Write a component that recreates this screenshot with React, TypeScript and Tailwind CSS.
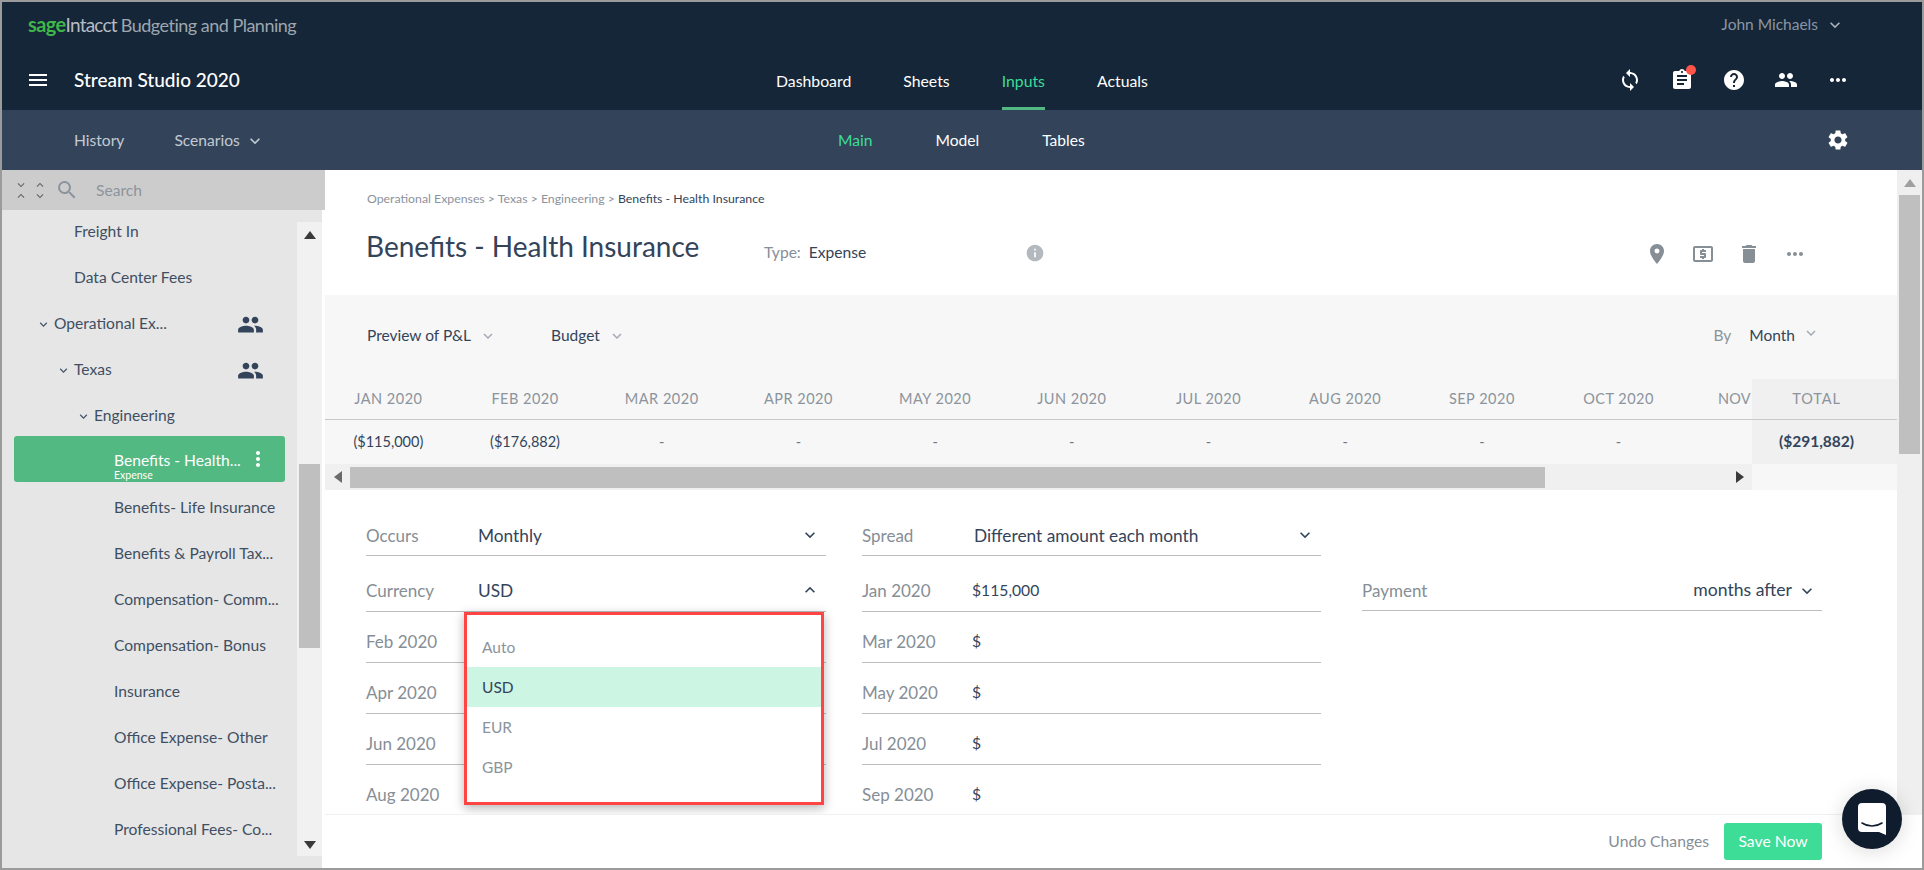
import React from 'react';
import {
  MdAssignment,
  MdDelete,
  MdHelp,
  MdInfo,
  MdKeyboardArrowDown,
  MdKeyboardArrowUp,
  MdLocalAtm,
  MdMenu,
  MdMoreHoriz,
  MdMoreVert,
  MdPeople,
  MdPlace,
  MdSearch,
  MdSettings,
  MdSync,
} from 'react-icons/md';

const months = ['JAN', 'FEB', 'MAR', 'APR', 'MAY', 'JUN', 'JUL', 'AUG', 'SEP', 'OCT'];
const values = ['($115,000)', '($176,882)', '-', '-', '-', '-', '-', '-', '-', '-'];

const leaves = [
  'Benefits- Life Insurance',
  'Benefits & Payroll Tax...',
  'Compensation- Comm...',
  'Compensation- Bonus',
  'Insurance',
  'Office Expense- Other',
  'Office Expense- Posta...',
  'Professional Fees- Co...',
];

const TopNav = () => (
  <div className="bg-[#152638] h-[108px] shrink-0 flex flex-col">
    <div className="h-[46px] flex items-center justify-between pl-[26px] pr-[77px]">
      <div className="flex items-baseline leading-none pb-[2px]">
        <span className="text-[#3fb54a] font-bold text-[20px] tracking-[-0.6px]">sage</span>
        <span className="text-[#b5bcc4] text-[19px] tracking-[-0.8px]">Intacct</span>
        <span className="text-[#9ea6af] text-[18px] tracking-[-0.5px] ml-[4px]">Budgeting and Planning</span>
      </div>
      <div className="flex items-center gap-[7px] text-[15.5px] text-[#8a96a3]">
        John Michaels
        <MdKeyboardArrowDown size={20} className="text-[#a7b0ba]" />
      </div>
    </div>
    <div className="flex-1 flex items-center pl-[24px] pr-[72px] pt-[2px]">
      <MdMenu size={24} className="text-white shrink-0" />
      <span className="ml-[24px] text-white text-[19px] font-medium w-[702px]">Stream Studio 2020</span>
      <div className="flex self-stretch -mt-[2px] gap-[52px] text-[15.8px] text-white">
        <span className="flex items-center pt-[6px] border-b-[3px] border-transparent">Dashboard</span>
        <span className="flex items-center pt-[6px] border-b-[3px] border-transparent">Sheets</span>
        <span className="flex items-center pt-[6px] text-[#3ddc97] border-b-[3px] border-[#52b983]">Inputs</span>
        <span className="flex items-center pt-[6px] border-b-[3px] border-transparent">Actuals</span>
      </div>
      <div className="ml-auto flex items-center gap-[28px] text-white">
        <MdSync size={24} />
        <span className="relative">
          <MdAssignment size={24} />
          <span className="absolute -top-[3px] -right-[2px] w-[10px] h-[10px] rounded-full bg-[#ff5449]" />
        </span>
        <MdHelp size={24} />
        <MdPeople size={24} />
        <MdMoreHoriz size={24} />
      </div>
    </div>
  </div>
);

const SubNav = () => (
  <div className="bg-[#33445a] h-[60px] shrink-0 flex items-center pl-[72px] pr-[72px] text-[15.6px]">
    <div className="w-[764px] flex items-center pt-[2px] text-[#c3cad2]">
      <span>History</span>
      <span className="ml-[50px]">Scenarios</span>
      <MdKeyboardArrowDown size={20} className="ml-[5px]" />
    </div>
    <div className="flex gap-[63px] pt-[2px]">
      <span className="text-[#3ddc97]">Main</span>
      <span className="text-white">Model</span>
      <span className="text-white">Tables</span>
    </div>
    <MdSettings size={24} className="text-white ml-auto" />
  </div>
);

const Row = ({ indent, open, team, children }: { indent: number; open?: boolean; team?: boolean; children: React.ReactNode }) => (
  <div className="h-[46px] shrink-0 flex items-center text-[15.6px] text-[#3f4f63]" style={{ paddingLeft: indent }}>
    {open && <MdKeyboardArrowDown size={15} className="text-[#46566a] mr-[3px]" />}
    <span>{children}</span>
    {team && <MdPeople size={27} className="text-[#33445a] ml-auto mr-[33px]" />}
  </div>
);

const Caret = ({ dir, color }: { dir: 'up' | 'down' | 'left' | 'right'; color: string }) => {
  const pts = { up: '0,8 6,0 12,8', down: '0,0 12,0 6,8', left: '8,0 8,12 0,6', right: '0,0 8,6 0,12' }[dir];
  const horiz = dir === 'left' || dir === 'right';
  return (
    <svg width={horiz ? 8 : 12} height={horiz ? 12 : 8} viewBox={horiz ? '0 0 8 12' : '0 0 12 8'}>
      <polygon points={pts} fill={color} />
    </svg>
  );
};

const Sidebar = () => (
  <div className="w-[323px] shrink-0 flex flex-col bg-white">
    <div className="h-[40px] shrink-0 bg-[#cccccc] flex items-center pl-[12px]">
      <div className="flex flex-col items-center text-[#666] w-[14px]">
        <MdKeyboardArrowDown size={14} className="-mb-[3px]" />
        <MdKeyboardArrowUp size={14} />
      </div>
      <div className="flex flex-col items-center text-[#666] w-[14px] ml-[5px]">
        <MdKeyboardArrowUp size={14} className="-mb-[3px]" />
        <MdKeyboardArrowDown size={14} />
      </div>
      <MdSearch size={24} className="text-[#8b939c] ml-[8px]" />
      <span className="ml-[17px] pt-[2px] text-[15.6px] text-[#8d949c]">Search</span>
    </div>
    <div className="flex-1 min-h-0 flex">
      <div className="w-[295px] bg-[#e6e6e6] overflow-hidden">
        <div className="-mt-[1px] flex flex-col">
          <Row indent={72}>Freight In</Row>
          <Row indent={72}>Data Center Fees</Row>
          <Row indent={34} open team>Operational Ex...</Row>
          <Row indent={54} open team>Texas</Row>
          <Row indent={74} open>Engineering</Row>
          <div className="h-[46px] shrink-0 -mt-[3px] mb-[3px] ml-[12px] w-[271px] bg-[#52b983] rounded-[3px] flex items-center text-white pl-[100px] pr-[15px]">
            <div className="flex-1 min-w-0 pt-[12px]">
              <div className="text-[15.6px] leading-[20px]">Benefits - Health...</div>
              <div className="text-[10.5px] leading-[10px]">Expense</div>
            </div>
            <MdMoreVert size={24} className="shrink-0 text-white" />
          </div>
          {leaves.map((l) => (
            <div key={l} className="h-[46px] shrink-0 flex items-center pl-[112px] text-[15.6px] text-[#3f4f63]">
              {l}
            </div>
          ))}
        </div>
      </div>
      <div className="w-[25px] bg-[#e6e6e6] flex flex-col">
        <div className="flex-1 my-[12px] bg-[#f1f1f1] flex flex-col items-center pt-[9px]">
          <Caret dir="up" color="#3a3a3a" />
          <div className="mt-[225px] w-[21px] h-[184px] bg-[#bfbfbf] shrink-0" />
          <div className="mt-auto mb-[7px]"><Caret dir="down" color="#3a3a3a" /></div>
        </div>
      </div>
    </div>
  </div>
);

const Preview = () => (
  <div className="bg-[#f7f7f7] h-[195px] shrink-0 flex flex-col">
    <div className="h-[84px] shrink-0 flex items-center pl-[42px] pr-[77px] pb-[3px] text-[15.5px] text-[#33445a]">
      <span>Preview of P&amp;L</span>
      <MdKeyboardArrowDown size={18} className="text-[#a3aab3] ml-[8px]" />
      <span className="ml-[54px]">Budget</span>
      <MdKeyboardArrowDown size={18} className="text-[#a3aab3] ml-[8px]" />
      <span className="ml-auto mr-[1px] text-[#8b939c]">By</span>
      <span className="ml-[17px]">Month</span>
      <MdKeyboardArrowDown size={18} className="text-[#a3aab3] ml-[7px] -mt-[6px]" />
    </div>
    <div className="flex-1 flex min-h-0">
      <div className="flex-1 min-w-0 overflow-hidden flex flex-col">
        <div className="h-[41px] shrink-0 border-b border-[#c9c9c9] flex">
          <div className="flex -ml-[5px]">
            {months.map((m) => (
              <div key={m} className="w-[136.7px] shrink-0 flex items-center justify-center text-[14.5px] tracking-[0.5px] text-[#8b939c]">
                {m} 2020
              </div>
            ))}
            <div className="w-[64px] shrink-0 flex items-center justify-end text-[14.5px] tracking-[0.2px] text-[#8b939c]">NOV</div>
          </div>
        </div>
        <div className="h-[44px] shrink-0 flex -ml-[5px]">
          {values.map((v, i) => (
            <div key={i} className={`w-[136.7px] shrink-0 flex items-center justify-center text-[14.5px] ${i < 2 ? 'text-[#33445a]' : 'text-[#6f7883]'}`}>
              {v}
            </div>
          ))}
        </div>
        <div className="h-[26px] shrink-0 bg-[#f0f0f0] flex items-center">
          <div className="w-[25px] flex justify-center"><Caret dir="left" color="#6a6a6a" /></div>
          <div className="w-[1195px] h-[21px] bg-[#bfbfbf]" />
          <div className="ml-auto mr-[8px]"><Caret dir="right" color="#3a3a3a" /></div>
        </div>
      </div>
      <div className="w-[145px] shrink-0 flex flex-col">
        <div className="h-[41px] bg-[#f0f0f0] border-b border-[#c9c9c9] flex items-center justify-center pr-[16px] text-[14.5px] tracking-[0.9px] text-[#8b939c]">TOTAL</div>
        <div className="h-[44px] bg-[#f0f0f0] flex items-center justify-center pr-[16px] text-[15.5px] font-bold text-[#33445a]">($291,882)</div>
      </div>
    </div>
  </div>
);

const Field = ({ label, value, chevron, amount, low }: { label: string; value?: string; chevron?: 'up' | 'down'; amount?: boolean; low?: boolean }) => (
  <div className={`flex items-center border-b border-[#bdbdbd] text-[17px] self-end h-[40px] ${low ? 'pt-[1px]' : 'pb-[1px]'}`}>
    <span className="w-[112px] shrink-0 text-[#868e96]">{label}</span>
    {value && <span className={amount ? 'text-[#33445a] text-[15.7px] -ml-[2px]' : 'text-[#33445a] text-[17.3px]'}>{value}</span>}
    {chevron === 'up' && <MdKeyboardArrowUp size={20} className="ml-auto mr-[6px] -mt-[2px] text-[#33445a]" />}
    {chevron === 'down' && <MdKeyboardArrowDown size={20} className="ml-auto mr-[6px] -mt-[2px] text-[#33445a]" />}
  </div>
);

const Form = () => (
  <div className="flex-1 min-h-0 overflow-hidden relative pl-[41px]">
    <div className="grid grid-cols-[460px_459px_460px] gap-x-[36px] grid-rows-[66px_56px_51px_51px_51px_51px]">
      <Field label="Occurs" value="Monthly" chevron="down" low />
      <Field label="Spread" value="Different amount each month" chevron="down" low />
      <div />
      <Field label="Currency" value="USD" chevron="up" />
      <Field label="Jan 2020" value="$115,000" amount />
      <div className="flex items-center border-b border-[#bdbdbd] text-[17px] self-end h-[40px] mb-[1px] ml-[5px] w-[460px]">
        <span className="text-[#868e96]">Payment</span>
        <span className="ml-auto text-[#33445a] text-[17.6px]">months after</span>
        <MdKeyboardArrowDown size={20} className="ml-[5px] mr-[5px] text-[#33445a]" />
      </div>
      <Field label="Feb 2020" />
      <Field label="Mar 2020" value="$" amount />
      <div />
      <Field label="Apr 2020" />
      <Field label="May 2020" value="$" amount />
      <div />
      <Field label="Jun 2020" />
      <Field label="Jul 2020" value="$" amount />
      <div />
      <Field label="Aug 2020" />
      <Field label="Sep 2020" value="$" amount />
    </div>
    <div className="absolute left-[139px] top-[122px] w-[360px] h-[193px] border-[3px] border-[#ff4444] bg-white shadow-[0_3px_10px_rgba(0,0,0,0.3)] pt-[12px] text-[15.5px] text-[#8b939c]">
      <div className="h-[40px] flex items-center pl-[15px] pt-[2px]">Auto</div>
      <div className="h-[40px] flex items-center pl-[15px] pt-[2px] bg-[#ccf5e3] text-[#33445a]">USD</div>
      <div className="h-[40px] flex items-center pl-[15px] pt-[2px]">EUR</div>
      <div className="h-[40px] flex items-center pl-[15px] pt-[2px]">GBP</div>
    </div>
  </div>
);

const Main = () => (
  <div className="flex-1 min-w-0 flex flex-col bg-white">
    <div className="flex-1 min-h-0 flex">
      <div className="flex-1 min-w-0 flex flex-col">
        <div className="h-[125px] shrink-0 flex flex-col pl-[42px] pr-[90px]">
          <div className="pt-[22px] text-[12.3px] leading-[14px] text-[#8b939c]">
            Operational Expenses &gt; Texas &gt; Engineering &gt; <span className="text-[#33445a]">Benefits - Health Insurance</span>
          </div>
          <div className="flex items-center mt-[20px]">
            <span className="text-[28px] leading-[40px] text-[#33445a] -ml-[1px] w-[398px]">Benefits - Health Insurance</span>
            <span className="text-[15.6px] text-[#868e96] mt-[14px]">Type:</span>
            <span className="text-[15.6px] text-[#33445a] ml-[8px] mt-[14px]">Expense</span>
            <MdInfo size={20} className="ml-[159px] mt-[14px] text-[#b4b9bf]" />
            <div className="ml-auto flex items-center gap-[22px] mt-[15px] text-[#868e96]">
              <MdPlace size={24} />
              <MdLocalAtm size={24} />
              <MdDelete size={24} />
              <MdMoreHoriz size={24} />
            </div>
          </div>
        </div>
        <Preview />
        <Form />
      </div>
      <div className="w-[25px] shrink-0 bg-[#efefef] flex flex-col items-center pt-[9px]">
        <Caret dir="up" color="#a0a0a0" />
        <div className="mt-[8px] w-[21px] h-[259px] bg-[#bfbfbf]" />
      </div>
    </div>
    <div className="h-[54px] shrink-0 border-t border-[#f0f0f0] flex items-center justify-end pr-[100px] gap-[15px] text-[15.7px]">
      <span className="text-[#868e96]">Undo Changes</span>
      <span className="w-[98px] h-[37px] rounded-[3px] bg-[#3ddc97] text-white flex items-center justify-center">Save Now</span>
    </div>
  </div>
);

export default function App() {
  return (
    <div className="relative w-[1924px] h-[870px] overflow-hidden border-2 border-[#9b9b9b] flex flex-col font-['Lato','Liberation_Sans',sans-serif]">
      <TopNav />
      <SubNav />
      <div className="flex-1 min-h-0 flex">
        <Sidebar />
        <Main />
      </div>
      <div className="absolute left-[1840px] top-[787px] w-[60px] h-[60px] rounded-full bg-[#0f1c2d] shadow-[0_2px_20px_rgba(0,0,0,0.15)] flex items-center justify-center">
        <svg width="28" height="32" viewBox="0 0 28 32">
          <path d="M4 0h20a4 4 0 0 1 4 4v28l-7-3H4a4 4 0 0 1-4-4V4a4 4 0 0 1 4-4z" fill="#fff" />
          <path d="M4 20c6 4 14 4 20 0" fill="none" stroke="#0f1c2d" strokeWidth="1.6" strokeLinecap="round" />
        </svg>
      </div>
    </div>
  );
}
